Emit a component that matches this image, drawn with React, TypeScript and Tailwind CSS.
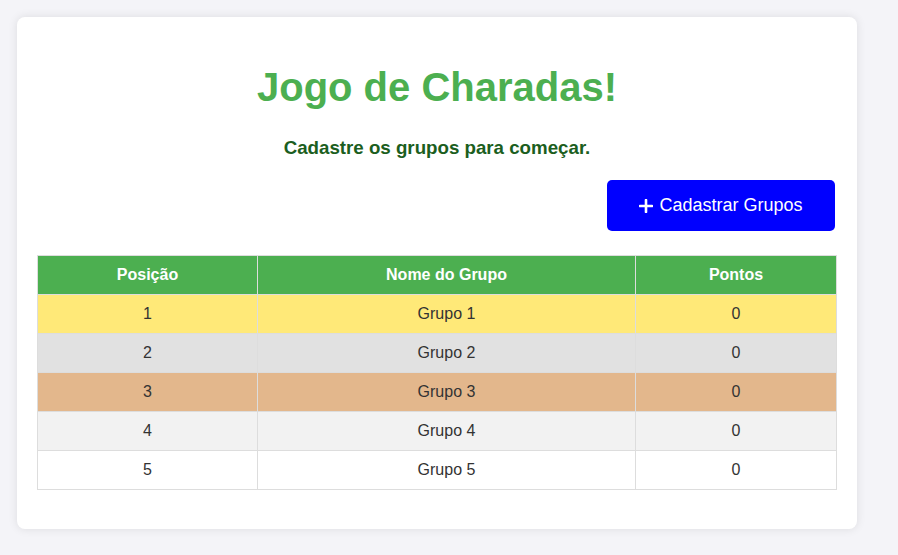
import React from "react";

const rows = [
  { pos: 1, name: "Grupo 1", pts: 0, bg: "bg-[#ffe978]" },
  { pos: 2, name: "Grupo 2", pts: 0, bg: "bg-[#e1e1e1]" },
  { pos: 3, name: "Grupo 3", pts: 0, bg: "bg-[#e3b78c]" },
  { pos: 4, name: "Grupo 4", pts: 0, bg: "bg-[#f2f2f2]" },
  { pos: 5, name: "Grupo 5", pts: 0, bg: "bg-white" },
];

export default function App() {
  return (
    <div
      className="min-h-[555px] w-full bg-[#f4f4f8] pt-[17px] pl-[17px] pb-[26px]"
      style={{ fontFamily: '"Liberation Sans", Arial, sans-serif' }}
    >
      <div className="w-[840px] rounded-[8px] bg-white px-[20px] pt-[20px] pb-[39px] shadow-[0_0_10px_rgba(0,0,0,0.1)]">
        <h1 className="mt-[27px] text-center text-[40px] leading-[46px] font-bold text-[#4caf50]">
          Jogo de Charadas!
        </h1>
        <h3 className="mt-[27px] text-center text-[18.72px] leading-[21.5px] font-bold text-[#1b5e20]">
          Cadastre os grupos para começar.
        </h3>
        <div className="mt-[21.5px] flex justify-end pr-[2px]">
          <button className="flex h-[51px] w-[228px] items-center justify-center gap-[6px] rounded-[5px] bg-[#0000ff] text-[18px] leading-[21px] text-white">
            <svg width="14" height="14" viewBox="0 0 14 14" className="mt-[1px]">
              <path d="M7 1v12M1 7h12" stroke="white" strokeWidth="2.6" strokeLinecap="round" />
            </svg>
            <span>Cadastrar Grupos</span>
          </button>
        </div>
        <table className="mt-[24px] w-[799px] table-fixed border-collapse text-[16px] leading-[18px]">
          <colgroup>
            <col className="w-[220px]" />
            <col className="w-[378px]" />
            <col className="w-[201px]" />
          </colgroup>
          <thead>
            <tr className="bg-[#4caf50] text-white">
              <th className="border border-[#dddddd] py-[10px] text-center font-bold">Posição</th>
              <th className="border border-[#dddddd] py-[10px] text-center font-bold">Nome do Grupo</th>
              <th className="border border-[#dddddd] py-[10px] text-center font-bold">Pontos</th>
            </tr>
          </thead>
          <tbody>
            {rows.map((r) => (
              <tr key={r.pos} className={`${r.bg} text-[#333333]`}>
                <td className="border border-[#dddddd] py-[10px] text-center">{r.pos}</td>
                <td className="border border-[#dddddd] py-[10px] text-center">{r.name}</td>
                <td className="border border-[#dddddd] py-[10px] text-center">{r.pts}</td>
              </tr>
            ))}
          </tbody>
        </table>
      </div>
    </div>
  );
}
